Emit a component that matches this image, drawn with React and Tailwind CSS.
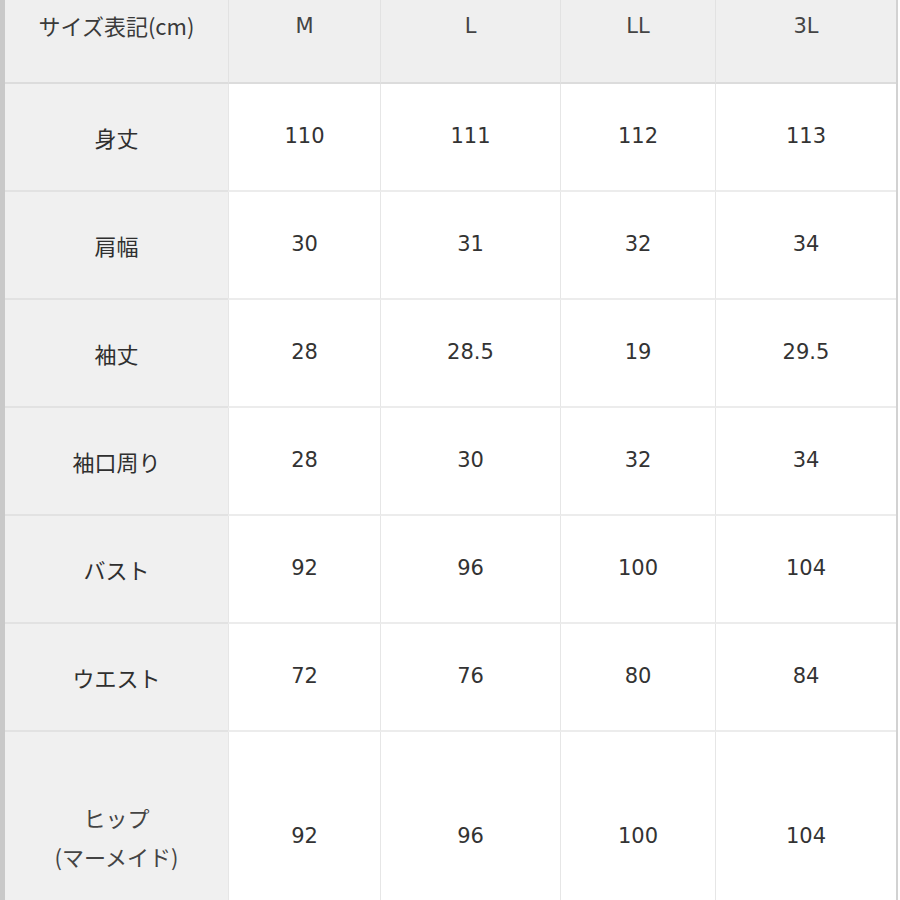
const sizes = ['M', 'L', 'LL', '3L'];

const rows = [
  { label: '身丈', values: ['110', '111', '112', '113'] },
  { label: '肩幅', values: ['30', '31', '32', '34'] },
  { label: '袖丈', values: ['28', '28.5', '19', '29.5'] },
  { label: '袖口周り', values: ['28', '30', '32', '34'] },
  { label: 'バスト', values: ['92', '96', '100', '104'] },
  { label: 'ウエスト', values: ['72', '76', '80', '84'] },
];

const font = { fontFamily: '"DejaVu Sans", "Noto Sans CJK JP", sans-serif' };
const jp = { fontFamily: '"Noto Sans CJK JP", sans-serif' };

export default function App() {
  return (
    <div className="w-[900px] h-[900px] overflow-hidden bg-white text-[#333]" style={font}>
      <div className="w-[898px] border-l-[5px] border-l-[#c9c9c9] border-r-2 border-r-[#d2d2d2]">
        <div className="grid grid-cols-[223px_152px_180px_155px_1fr]">
          {/* header */}
          <div className="h-[84px] bg-[#efefef] border-b-2 border-b-[#dcdcdc] flex justify-center pt-[9px] text-[22px] text-[#3a3a3a]" style={jp}>
            サイズ表記(cm)
          </div>
          {sizes.map((s) => (
            <div key={s} className="h-[84px] bg-[#efefef] border-b-2 border-b-[#dcdcdc] border-l border-l-[#e2e2e2] flex justify-center pt-[11px] text-[21px] text-[#444]">
              {s}
            </div>
          ))}

          {rows.map((r) => (
            <Row key={r.label} label={r.label} values={r.values} />
          ))}

          {/* last row */}
          <div className="h-[210px] bg-[#f0f0f0] flex flex-col items-center justify-center text-[22px] leading-[39px] text-[#444]" style={jp}>
            <span>ヒップ</span>
            <span>(マーメイド)</span>
          </div>
          {['92', '96', '100', '104'].map((v, i) => (
            <div key={i} className="h-[210px] border-l border-l-[#e6e6e6] flex items-center justify-center text-[21px]">
              {v}
            </div>
          ))}
        </div>
      </div>
    </div>
  );
}

function Row({ label, values }) {
  return (
    <>
      <div className="h-[108px] bg-[#f0f0f0] border-b-2 border-b-[#e2e2e2] flex items-center justify-center text-[22px] text-[#2f2f2f]" style={jp}>
        {label}
      </div>
      {values.map((v, i) => (
        <div key={i} className="h-[108px] border-b-2 border-b-[#ececec] border-l border-l-[#e6e6e6] flex items-center justify-center text-[21px]">
          {v}
        </div>
      ))}
    </>
  );
}
